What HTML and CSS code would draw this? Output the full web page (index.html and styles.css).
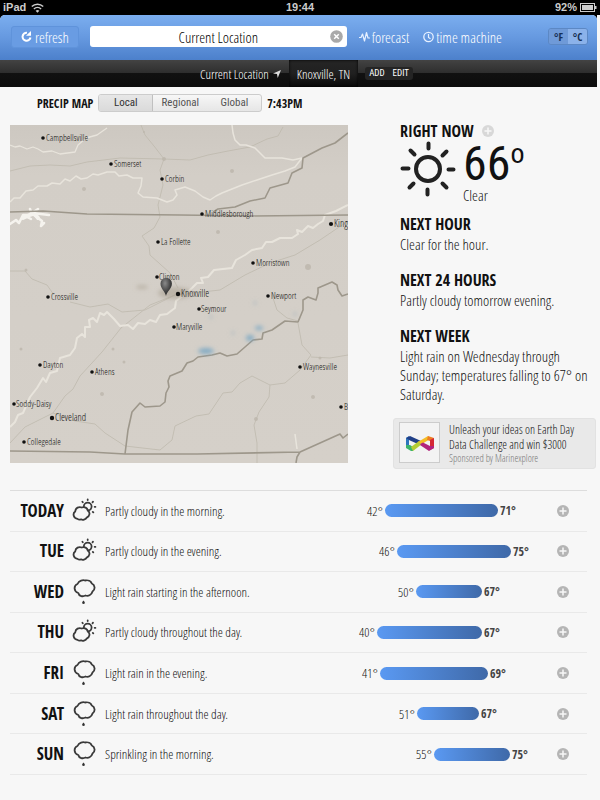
FILE: index.html
```html
<!DOCTYPE html>
<html lang="en">
<head>
<meta charset="utf-8">
<meta name="viewport" content="width=device-width, initial-scale=1">
<title>Knoxville, TN forecast</title>
<link rel="stylesheet" href="styles.css">
</head>
<body>
<svg class="defs" aria-hidden="true">
  <symbol id="plus" viewBox="0 0 12 12"><circle cx="6" cy="6" r="6" fill="currentColor"/><path d="M6 2.500v7M2.500 6h7" stroke="#f7f7f7" stroke-width="1.500"/></symbol>
  <symbol id="partly" viewBox="0 0 26 26"><g fill="none" stroke="#3a3a3a" stroke-width="1.800" stroke-linecap="round" stroke-linejoin="round"><circle cx="15.700" cy="8.600" r="3.900"/><path d="M5.500 20.800C1.500 20.300 .300 15.500 3.200 13.500C3.500 9.800 7 8.300 9.700 9.500C12.500 8.300 15.500 10 15.700 12.500C18.600 14.500 17.700 18.200 15 19.300C13.500 22 10.500 22.300 9 21.300C7.700 22 6.500 21.700 5.500 20.800Z" fill="#f7f7f7"/><path d="M15.700 1.400v.700M10.400 3.700l.400.500M21 3.700l-.500.600M23.400 8.800l-.700.100M21.300 14.400l-.500-.500"/></g></symbol>
  <symbol id="rain" viewBox="0 0 26 26"><g fill="none" stroke="#3a3a3a" stroke-width="1.800" stroke-linejoin="round"><path d="M5.500 5C7 1.500 11 .700 13 1.500C16 .800 19 2 19.800 4.500C23.200 6 23.500 10.500 20.500 12.500C19.500 16.200 16 17.600 13.500 16.500C11 17.800 7 17.500 6.300 14C1.500 12.500 1.500 6.500 5.500 5Z"/></g><path d="M11.500 21.600C12.300 22.600 13 23.300 12.800 24.200C12.500 25.200 10.500 25.200 10.200 24.200C10 23.300 10.700 22.600 11.500 21.600Z" fill="#333"/></symbol>
</svg>

<div class="status">
  <span class="status-left">iPad
    <svg width="13" height="10" viewBox="0 0 13 10" aria-hidden="true"><g fill="none" stroke="#ccc" stroke-width="1.500"><path d="M.800 3.600C4 .300 9 .300 12.200 3.600M2.900 6C5 4 8 4 10.100 6"/></g><path d="M6.500 9.800L4.600 7.700Q6.500 6.200 8.400 7.700z" fill="#ccc"/></svg>
  </span>
  <span class="status-time">19:44</span>
  <span class="status-right">92%
    <svg width="17" height="9" viewBox="0 0 17 9" aria-hidden="true"><rect x=".500" y=".500" width="14" height="8" fill="none" stroke="#ccc"/><path d="M2 2h11v5H2zM15 3h1.500v3H15z" fill="#ccc"/></svg>
  </span>
</div>

<header class="topbar">
  <button class="refresh" type="button">
    <svg width="11" height="11" viewBox="0 0 11 11" aria-hidden="true"><path d="M6 1.800A4 4 0 1 0 9.500 6.500" fill="none" stroke="#fff" stroke-width="2"/><path d="M5 4.800H10V0z" fill="#fff"/></svg>
    refresh
  </button>
  <div class="search">
    <input type="text" value="Current Location" aria-label="Location">
    <button class="clear" type="button" aria-label="Clear">
      <svg width="13" height="13" viewBox="0 0 13 13" aria-hidden="true"><circle cx="6.500" cy="6.500" r="6.300" fill="#a9a9a9"/><path d="M4.200 4.200l4.600 4.600M8.800 4.200L4.200 8.800" stroke="#fff" stroke-width="1.500"/></svg>
    </button>
  </div>
  <nav class="links">
    <a href="#forecast"><svg width="11" height="12" viewBox="0 0 11 12" aria-hidden="true"><path d="M0 6.500h2L3.500 3l2 7L7.500 1.500 9 7h2" fill="none" stroke="#e6f0ff" stroke-width="1.200" stroke-linejoin="round"/></svg>forecast</a>
    <a href="#time"><svg width="11" height="12" viewBox="0 0 11 12" aria-hidden="true"><circle cx="5.500" cy="6" r="4.700" fill="none" stroke="#e6f0ff" stroke-width="1.300"/><path d="M5.500 3v3.400l2 1.300" fill="none" stroke="#e6f0ff" stroke-width="1.200"/></svg>time machine</a>
  </nav>
  <div class="units"><button class="on" type="button">°F</button><button type="button">°C</button></div>
</header>

<nav class="places">
  <a class="place" href="#here">Current Location <svg width="8" height="8" viewBox="0 0 8 8" aria-hidden="true"><path d="M8 0L4.700 8 4 4 0 3.400z" fill="#ddd"/></svg></a>
  <a class="place current" href="#knoxville">Knoxville, TN</a>
  <div class="edit"><button type="button">ADD</button><button type="button">EDIT</button></div>
</nav>

<main>
  <div class="maptools">
    <strong>PRECIP MAP</strong>
    <div class="seg"><button class="on" type="button">Local</button><button type="button">Regional</button><button type="button">Global</button></div>
    <strong>7:43PM</strong>
  </div>

  <div class="now">
    <svg class="map" viewBox="0 0 338 338" role="img" aria-label="Precipitation map">
      <defs>
        <linearGradient id="land" x1="0" y1="0" x2="0" y2="1"><stop offset="0" stop-color="#cdc8c1"/><stop offset=".150" stop-color="#d3cec7"/><stop offset="1" stop-color="#d5d0c9"/></linearGradient>
        <radialGradient id="pin" cx=".400" cy=".300" r=".800"><stop offset="0" stop-color="#8a8a8a"/><stop offset=".500" stop-color="#4c4c4c"/><stop offset="1" stop-color="#111"/></radialGradient>
        <filter id="soft" x="-50%" y="-50%" width="200%" height="200%"><feGaussianBlur stdDeviation="2"/></filter>
      </defs>
      <rect width="338" height="338" fill="url(#land)"/>
      <g fill="#b5aea3" opacity=".600">
        <circle cx="74" cy="64" r="2"/><circle cx="92" cy="269" r="2"/><circle cx="298" cy="142" r="3"/><circle cx="208" cy="107" r="2"/><circle cx="222" cy="46" r="2"/><circle cx="303" cy="272" r="2"/><circle cx="246" cy="294" r="2"/><circle cx="16" cy="145" r="1.500"/><circle cx="103" cy="224" r="1.500"/><circle cx="114" cy="237" r="1.500"/><circle cx="11" cy="224" r="1.500"/><circle cx="310" cy="233" r="1.500"/><circle cx="154" cy="34" r="2"/><circle cx="134" cy="7" r="1"/>
      </g>
      <g fill="none" stroke="#bdb8ac" stroke-width="1" opacity=".750" stroke-linejoin="round">
        <path d="M0 46L20 41L40 40L60 41L77 37L110 33L154 34L180 35L198 30L218 26L240 22L257 14L268 11L273 2"/>
        <path d="M131 0L135 10L144 21L154 34L150 45L153 60L148 80L150 92L144 103L132 111L139 121L140 130L160 148L168 163"/>
        <path d="M0 146L15 146L22 154L37 160L44 170"/>
        <path d="M0 318L15 302L43 288L55 271L63 264L70 251L92 227L111 203L140 180L165 170L210 165L235 150L260 138L285 130L310 115L338 96"/>
        <path d="M60 177L80 182L98 179L112 187L135 185L165 170"/>
        <path d="M43 288L65 296L85 299L95 308L115 321L150 325L162 315L165 301L186 291L199 289L213 268L222 267L230 258L242 251L260 260L275 258L290 245L301 230L292 220L288 198"/>
        <path d="M301 232L320 233L338 230"/><path d="M260 260L259 272L249 287L244 300L247 318L247 338"/><path d="M262 170L267 185L277 193L288 196"/>
      </g>
      <g fill="none" stroke="#e8e4dc" stroke-width="1.500" stroke-linejoin="round">
        <path d="M0 20L5 22L10 21L17 24L23 22L28 24L33 27L42 26L50 29L65 27L68 20L76 13L87 10L97 3" stroke-width="1.300"/>
        <path d="M0 77L4 73L10 73L16 66L23 65L28 61L37 61L42 58L50 59L55 54L60 56L66 51L71 54L77 53L83 49L88 50L97 47L105 47L109 51L117 50L123 53L132 53L131 61L128 68L133 72L147 73L157 77L163 75L167 70L165 65L175 62L185 66L193 72L200 75L206 71L212 68L232 60L247 55L262 50L275 46L285 42L292 33L283 35L272 33L255 33L250 28L245 23L236 20L230 20L225 15L223 8L222 0"/>
        <path d="M0 302L5 297L8 290L13 288L20 272L27 263L33 253L36 257L40 248L47 246L50 233L60 230L65 223L67 213L72 209L75 212L75 202L80 202L79 195L83 193L87 197L90 188L94 190L97 187L104 194L110 201L118 200L123 204L128 198L135 199L140 195L146 197L150 190L157 189L165 183L166 176L175 169L182 163L187 158L193 158L191 153L198 152L204 145L222 143L226 135L235 130L242 125L252 123L256 117L262 117L270 113L282 113L288 109L287 105L292 107L298 101L303 103L308 99L313 96L315 90L326 86L338 80" stroke-width="2"/>
        <path d="M285 309L287 324"/>
      </g>
      <g fill="none" stroke="#f5f3ee" stroke-linecap="round" stroke-linejoin="round"><path d="M0 99L6 95L9 98L13 90L22 90L20 84M15 91L21 94M22 88L39 90M24 90L32 96L31 101L34 98M22 88L28 84" stroke-width="2.500"/><path d="M13 93L24 88L28 93" stroke-width="4"/></g>
      <g fill="none" stroke="#9d978b" stroke-width="1.600" stroke-linejoin="round">
        <path d="M0 87L33 86L77 89L170 90L243 91L338 90" stroke-width="1.300"/>
        <path d="M203 87L208 84L225 82L240 76L255 73L260 63L278 58L282 48L292 43L293 33L312 23L325 18L338 8"/>
        <path d="M338 169L332 171L328 165L327 160L322 157L308 163L308 168L306 175L298 172L293 175L293 185L288 197L275 196L262 205L253 208L252 214L243 215L235 222L227 229L217 231L210 228L202 230L188 232L183 236L177 238L172 246L160 251L158 256L159 262L156 268L155 277L150 281L135 282L130 278L122 287L118 305L115 329"/>
        <path d="M0 326L80 327L115 329L187 329L290 327L310 318L330 309L333 313L338 309M290 327L287 332L286 338"/>
      </g>
      <g filter="url(#soft)"><g fill="#6fa3c4" opacity=".800"><ellipse cx="196" cy="226" rx="8" ry="3"/><ellipse cx="240" cy="213" rx="4" ry="3"/><ellipse cx="249" cy="203" rx="4" ry="2"/></g><g fill="#9aafba" opacity=".500"><circle cx="223" cy="208" r="2"/><circle cx="201" cy="192" r="2"/><circle cx="285" cy="189" r="2"/><circle cx="245" cy="178" r="2"/></g><g fill="#a39a8a" opacity=".500"><ellipse cx="165" cy="168" rx="17" ry="6"/><ellipse cx="132" cy="162" rx="6" ry="2"/></g></g>
      <g fill="#111">
        <circle cx="33" cy="13" r="1.800"/><circle cx="101" cy="39" r="1.800"/><circle cx="152" cy="54" r="1.800"/><circle cx="192" cy="89" r="1.800"/><circle cx="321" cy="99" r="2.100"/><circle cx="148" cy="117" r="1.800"/><circle cx="243" cy="138" r="1.800"/><circle cx="147" cy="152" r="1.800"/><circle cx="168" cy="169" r="2.200"/><circle cx="38" cy="172" r="1.800"/><circle cx="258" cy="171" r="1.800"/><circle cx="189" cy="184" r="1.800"/><circle cx="164" cy="202" r="1.800"/><circle cx="30" cy="240" r="1.800"/><circle cx="82" cy="247" r="1.800"/><circle cx="290" cy="242" r="1.800"/><circle cx="4" cy="279" r="1.800"/><circle cx="42" cy="293" r="2.200"/><circle cx="331" cy="282" r="1.800"/><circle cx="14" cy="317" r="1.800"/>
      </g>
      <g class="towns">
        <text x="36" y="16">Campbellsville</text><text x="104" y="42">Somerset</text><text x="155" y="57">Corbin</text><text x="195" y="92">Middlesborough</text><text x="151" y="120">La Follette</text><text x="246" y="141">Morristown</text><text x="149" y="155">Clinton</text><text x="41" y="175">Crossville</text><text x="261" y="174">Newport</text><text x="191" y="187">Seymour</text><text x="166" y="205">Maryville</text><text x="33" y="243">Dayton</text><text x="85" y="250">Athens</text><text x="293" y="245">Waynesville</text><text x="6" y="282">Soddy-Daisy</text><text x="334" y="285">B</text><text x="17" y="320">Collegedale</text>
        <text class="city" x="171" y="172">Knoxville</text><text class="city" x="45" y="296">Cleveland</text><text class="city" x="324" y="102">King</text>
      </g>
      <path d="M156 171C155 166 150.500 164 150.500 158.500A5.700 5.700 0 0 1 161.900 158.500C161.900 164 157 166 156 171Z" fill="url(#pin)"/>
    </svg>

    <section class="summary">
      <h2>RIGHT NOW <button class="more faint" type="button" aria-label="More about right now"><svg width="12" height="12"><use href="#plus"/></svg></button></h2>
      <div class="current-weather">
        <svg width="56" height="56" viewBox="0 0 56 56" aria-hidden="true"><g fill="none" stroke="#222" stroke-width="4" stroke-linecap="round"><circle cx="28" cy="28" r="12"/><path d="M28.500 2.500v5M27.500 48.500v5M2.500 27.500h6M48.500 28.500h5M10.500 9.500l4 4M46.500 10.500l-4 4M9.500 46.500l4-4M46.500 46.500l-4-4"/></g></svg>
        <div class="reading"><p class="temp">66<span>o</span></p><p class="cond">Clear</p></div>
      </div>
      <h2>NEXT HOUR</h2>
      <p>Clear for the hour.</p>
      <h2>NEXT 24 HOURS</h2>
      <p>Partly cloudy tomorrow evening.</p>
      <h2>NEXT WEEK</h2>
      <p>Light rain on Wednesday through Sunday; temperatures falling to 67° on Saturday.</p>
      <a class="sponsor" href="#sponsor">
        <span class="logo"><svg width="30" height="20" viewBox="0 0 30 20" aria-hidden="true">
          <path d="M1 5L4 3V14L1 15Z" fill="#2d75bd"/><path d="M1 5L5 3L16 8L13 11L5 7.500Z" fill="#203f87"/><path d="M1 12L5 12L8 14L8 18L6 18L1 15Z" fill="#3db36b"/><path d="M6 14L14 8L17 11L8 18Z" fill="#b4cc35"/><path d="M13 9L23 3L25 6L17 11Z" fill="#f3bd27"/><path d="M23 3L29 5L28 9L22 7Z" fill="#ed7d24"/><path d="M29 5V15L25 17V7Z" fill="#d52836"/><path d="M16 10.500L18 9.500L25 13L29 13V15L24 18L15 12Z" fill="#b2237d"/>
        </svg></span>
        <span class="pitch">Unleash your ideas on Earth Day Data Challenge and win $3000<small>Sponsored by Marinexplore</small></span>
      </a>
    </section>
  </div>

  <ul class="week">
    <li><h3>TODAY</h3><svg class="icon"><use href="#partly"/></svg><p>Partly cloudy in the morning.</p><div class="range"><span class="low" style="margin-left:4%">42°</span><i style="width:56.5%"></i><b>71°</b></div><button class="more" type="button" aria-label="More about today"><svg width="12" height="12"><use href="#plus"/></svg></button></li>
    <li><h3>TUE</h3><svg class="icon"><use href="#partly"/></svg><p>Partly cloudy in the evening.</p><div class="range"><span class="low" style="margin-left:10%">46°</span><i style="width:57%"></i><b>75°</b></div><button class="more" type="button" aria-label="More about Tuesday"><svg width="12" height="12"><use href="#plus"/></svg></button></li>
    <li><h3>WED</h3><svg class="icon"><use href="#rain"/></svg><p>Light rain starting in the afternoon.</p><div class="range"><span class="low" style="margin-left:19.5%">50°</span><i style="width:33%"></i><b>67°</b></div><button class="more" type="button" aria-label="More about Wednesday"><svg width="12" height="12"><use href="#plus"/></svg></button></li>
    <li><h3>THU</h3><svg class="icon"><use href="#partly"/></svg><p>Partly cloudy throughout the day.</p><div class="range"><span class="low" style="margin-left:0%">40°</span><i style="width:52.5%"></i><b>67°</b></div><button class="more" type="button" aria-label="More about Thursday"><svg width="12" height="12"><use href="#plus"/></svg></button></li>
    <li><h3>FRI</h3><svg class="icon"><use href="#rain"/></svg><p>Light rain in the evening.</p><div class="range"><span class="low" style="margin-left:1.5%">41°</span><i style="width:54%"></i><b>69°</b></div><button class="more" type="button" aria-label="More about Friday"><svg width="12" height="12"><use href="#plus"/></svg></button></li>
    <li><h3>SAT</h3><svg class="icon"><use href="#rain"/></svg><p>Light rain throughout the day.</p><div class="range"><span class="low" style="margin-left:20%">51°</span><i style="width:31%"></i><b>67°</b></div><button class="more" type="button" aria-label="More about Saturday"><svg width="12" height="12"><use href="#plus"/></svg></button></li>
    <li><h3>SUN</h3><svg class="icon"><use href="#rain"/></svg><p>Sprinkling in the morning.</p><div class="range"><span class="low" style="margin-left:28.5%">55°</span><i style="width:38%"></i><b>75°</b></div><button class="more" type="button" aria-label="More about Sunday"><svg width="12" height="12"><use href="#plus"/></svg></button></li>
  </ul>
</main>
</body>
</html>
```
FILE: styles.css
```css
* { box-sizing: border-box; }

html { background: #f7f7f7; }

body {
  margin: 0;
  color: #111;
  font-family: "Open Sans Condensed Light", "Roboto Condensed", sans-serif;
  font-size: 15px;
}

h2, h3, p, ul { margin: 0; padding: 0; }

h2, h3, b, strong { font-family: "Open Sans Condensed", "Roboto Condensed", sans-serif; }

button, input {
  margin: 0;
  padding: 0;
  border: 0;
  background: none;
  color: inherit;
  font: inherit;
}

a { color: inherit; text-decoration: none; }

svg { display: block; flex: none; }

.defs { position: absolute; width: 0; height: 0; }

/* Device status bar */
.status {
  display: grid;
  grid-template-columns: 1fr auto 1fr;
  align-items: center;
  height: 15px;
  padding: 0 3px;
  background: #000;
  color: #ccc;
  font: bold 11px/15px "Liberation Sans", sans-serif;
}

.status-left, .status-right { display: flex; align-items: center; gap: 5px; }
.status-right { justify-content: flex-end; gap: 3px; }

/* Blue toolbar */
.topbar {
  display: flex;
  align-items: center;
  height: 45px;
  margin-right: 3px;
  padding: 0 9px 2px 11px;
  border-radius: 5px 5px 0 0;
  background: linear-gradient(#7baeef, #6699e0 50%, #4c80cb);
  box-shadow: 0 -5px 0 5px #000;
  clip-path: inset(0 0 0 0);
  color: #fff;
}

.refresh {
  display: flex;
  align-items: center;
  justify-content: center;
  gap: 3px;
  width: 68px;
  height: 22px;
  border: 1px solid #5f93db;
  border-radius: 3px;
  background: #699ce3;
  font-size: 15px;
}

.search { position: relative; flex: 1; margin-left: 11px; }

.search input {
  display: block;
  width: 100%;
  height: 21px;
  border-radius: 3px;
  background: #fff;
  color: #000;
  text-align: center;
}

.clear { position: absolute; top: 4px; right: 4px; }

.links { display: flex; gap: 14px; margin-left: 12px; font-size: 15px; }
.links a { display: flex; align-items: center; gap: 2px; }

.units {
  display: flex;
  margin-left: 46px;
  border: 1px solid #5c88c4;
  border-radius: 3px;
  overflow: hidden;
}

.units button {
  width: 19px;
  height: 15px;
  background: #8bb2ea;
  color: #173055;
  font-family: "Open Sans Condensed", sans-serif;
  font-size: 11px;
  line-height: 15px;
}

.units .on { background: #6f9ad8; }

/* Saved places */
.places {
  display: flex;
  align-items: center;
  justify-content: center;
  height: 27px;
  margin-right: 3px;
  padding-left: 8px;
  background: linear-gradient(#434343, #2e2e2e 48%, #111 50%, #0d0d0d);
  color: #fff;
  font-size: 13px;
}

.place { display: flex; align-items: center; gap: 4px; height: 27px; padding: 0 8px; }

.current {
  background: linear-gradient(#252525, #202020 50%, #090909);
  box-shadow: inset 0 0 3px #000;
}

.edit { display: flex; margin-left: 7px; border-radius: 3px; background: #242424; }

.edit button {
  height: 13px;
  padding: 0 4px;
  font-family: "Roboto Condensed", sans-serif;
  font-size: 9px;
  line-height: 13px;
}

/* Map controls */
.maptools {
  display: flex;
  align-items: center;
  gap: 5px;
  padding: 7px 37px 0;
  font-size: 12px;
}

.seg {
  display: flex;
  border: 1px solid #ccc;
  border-radius: 3px;
  background: linear-gradient(#f7f7f7, #e6e6e6);
  overflow: hidden;
}

.seg button {
  width: 54px;
  height: 16px;
  color: #555;
  font-family: "Roboto Condensed", sans-serif;
  font-size: 11px;
  line-height: 16px;
}

.seg .on {
  border-right: 1px solid #c0c0c0;
  background: linear-gradient(#e7e7e7, #dadada);
  color: #333;
}

/* Map and summary */
.now {
  display: grid;
  grid-template-columns: 338fr 200fr;
  gap: 52px;
  padding: 13px 0 0 10px;
}

.map { width: 100%; }

.towns { fill: #111; font-size: 9px; }
.towns .city { font-size: 10px; }

.summary h2 {
  display: flex;
  align-items: center;
  gap: 8px;
  margin-top: 17px;
  font-size: 16px;
  line-height: 18px;
}

.summary h2:first-child { margin-top: -3px; }
.summary > p { padding-right: 8px; line-height: 19px; margin-top: 2px; }

.more { color: #b5b5b5; }
.faint { color: #d8d8d8; }

.current-weather { display: flex; gap: 7px; height: 58px; }
.current-weather svg { margin-top: 1px; }

.temp {
  display: flex;
  font-family: "Roboto Condensed", sans-serif;
  font-size: 48px;
  line-height: 48px;
}

.temp span { font-size: 28px; line-height: 28px; }
.cond { line-height: 14px; }

.sponsor {
  display: flex;
  gap: 9px;
  margin: 14px 4px 0 -7px;
  padding: 3px 5px;
  border: 1px solid #e2e2e2;
  border-radius: 3px;
  background: #e9e9e9;
  font-size: 12px;
  line-height: 15px;
}

.logo {
  display: grid;
  place-items: center;
  flex: none;
  width: 41px;
  height: 41px;
  border: 1px solid #ccc;
  background: #f3f3f3;
}

.pitch small { display: block; color: #777; font-size: 10px; line-height: 13px; }

/* Week */
.week {
  display: grid;
  grid-auto-rows: 1fr;
  min-height: 285px;
  margin: 21px 13px 24px 10px;
  border-top: 1px solid #ddd;
  list-style: none;
}

.week li {
  display: grid;
  grid-template-columns: 54px 26px 1fr 207px 12px;
  align-items: center;
  padding-right: 18px;
  border-bottom: 1px solid #e9e9e9;
}

.week h3 { font-size: 17px; line-height: 20px; text-align: right; }
.week p { padding-left: 15px; font-size: 13px; }

.icon { width: 26px; height: 26px; margin-left: 8px; }

.range { display: flex; align-items: center; gap: 2px; margin-right: 7px; font-size: 13px; }
.range i { height: 13px; border-radius: 7px; background: linear-gradient(90deg, #5a99f2, #3f69a8); }
.range b { color: #444; font-size: 12px; }
.low { flex: none; width: 25px; text-align: right; }
```
